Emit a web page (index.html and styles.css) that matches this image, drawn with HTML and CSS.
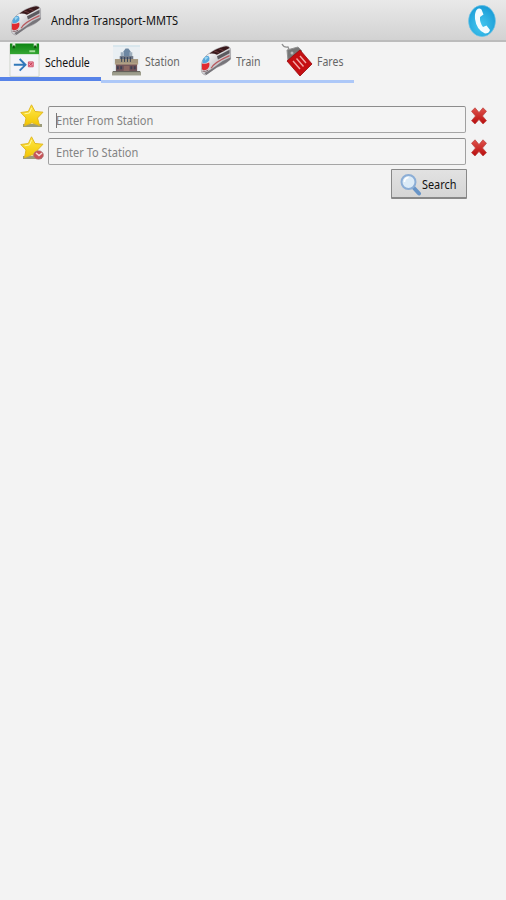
FILE: index.html
```html
<!DOCTYPE html>
<html lang="en">
<head>
    <meta charset="UTF-8">
    <meta name="viewport" content="width=device-width, initial-scale=1.0">
    <title>Andhra Transport-MMTS</title>
    <link rel="stylesheet" href="styles.css">
</head>
<body>
    <!-- shared icons -->
    <svg class="defs" width="0" height="0">
        <linearGradient id="gold" x1="0" y1="0" x2="0" y2="1">
            <stop offset="0" stop-color="#ffe94a"/>
            <stop offset="1" stop-color="#f2c500"/>
        </linearGradient>
        <linearGradient id="side" x1="0" y1="0" x2="1" y2="1">
            <stop offset="0.3" stop-color="#f1f1f3"/>
            <stop offset="1" stop-color="#8d8d94"/>
        </linearGradient>
        <linearGradient id="red" x1="0" y1="0" x2="0" y2="1">
            <stop offset="0" stop-color="#e0544d"/>
            <stop offset="1" stop-color="#b80c0c"/>
        </linearGradient>
        <linearGradient id="green" x1="0" y1="0" x2="0" y2="1">
            <stop offset="0" stop-color="#0c8511"/>
            <stop offset="1" stop-color="#35a634"/>
        </linearGradient>
        <radialGradient id="sky" cx="0.45" cy="0.65" r="0.6">
            <stop offset="0" stop-color="#45c8f0"/>
            <stop offset="1" stop-color="#1d9fd8"/>
        </radialGradient>
        <symbol id="train" viewBox="0 0 32 32">
            <path d="M1 23Q0 16 7 10Q14 4 25 1Q31 1 31 5V14Q28 19 17 23L5 31Q0 30 1 23z" fill="url(#side)" stroke="#9a999d" stroke-width=".7"/>
            <path d="M9 9Q15 4 25 1.500Q29 1 30 3L17 10Q13 8 9 9z" fill="#38181b"/>
            <path d="M14 6l5 2M19 4l5 2" stroke="#6d3b3e"/>
            <path d="M17 11.500L30 5v3.500L18 15z" fill="#5d5a60"/>
            <path d="M11 24Q14 18 30 11" fill="none" stroke="#b9595d" stroke-width="1.200"/>
            <path d="M4 29Q13 24 18 20T31 13v2Q26 19 17 23L6 31z" fill="#77757a"/>
            <path d="M2 16Q4 11 8 11Q10 13 9 16Q7 19 2 19z" fill="#56a5da"/>
            <path d="M4 13Q7 11 8 13L5 16z" fill="#96d3f0"/>
            <path d="M1.500 19Q5 20 9 18Q10 22 7 25Q3 27 1.500 25z" fill="#e02a30"/>
            <path d="M2 27q3 1 6-1" fill="none" stroke="#85646a"/>
        </symbol>
        <symbol id="star" viewBox="0 0 24 24">
            <path d="M3 20h19v3H3z" fill="#9c9c7b"/>
            <path d="M11.500 .8L15 7.500l8 .7-5.500 5.800 2 7.500-7.500-2.700-7.500 2.900 1.500-7.700L.8 8.500l7.500-1z" fill="url(#gold)" stroke="#e2b820" stroke-width="1" stroke-linejoin="round"/>
            <path d="M11.500 4L9.500 9l-5 .8" fill="none" stroke="#fff6a0"/>
        </symbol>
        <symbol id="cross" viewBox="0 0 16 18">
            <path d="M4 .8L8 5.500 12 .8l3.500 3.500L11.500 9l4 4.700L12 17l-4-4.500L4 17 .5 13.700 4.500 9 .5 4.300z" fill="url(#red)" stroke="#b9403e" stroke-width=".7" stroke-linejoin="round"/>
        </symbol>
    </svg>

    <header class="title-bar">
        <svg class="train-icon"><use href="#train"/></svg>
        <h1 class="title"><span class="label">Andhra Transport-MMTS</span></h1>
        <svg class="phone-icon" viewBox="0 0 28 32">
            <ellipse cx="14" cy="16" rx="13.500" ry="15.700" fill="url(#sky)" stroke="#79c8e8" stroke-width=".6"/>
            <path d="M8.500 5Q11 2.500 13.500 4.500L15.500 9.500L12 12Q11.500 17.500 15 22L18.500 20.500L22 25Q21 28.500 17 28.500Q8.500 25 7 14Q6.500 8 8.500 5z" fill="#f3fcff"/>
        </svg>
    </header>

    <nav class="tabs">
        <a class="tab tab-schedule active">
            <svg class="tab-icon calendar-icon" viewBox="0 0 32 35">
                <path d="M1 2h30v33H1z" fill="#f3f4f8" stroke="#cfd6ca"/>
                <path d="M1 1h30v11H1z" fill="url(#green)"/>
                <path d="M5 0v4M27 0v4" stroke="#d9e9d5" stroke-width="3"/>
                <path d="M5 3v3M27 3v3" stroke="#12520f" stroke-width="2"/>
                <path d="M21 9h6" stroke="#a6df9d" stroke-width="2"/>
                <path d="M5 23h12M11 17l6 6-6 6" fill="none" stroke="#3178b9" stroke-width="2"/>
                <path d="M20 20h5v5h-5z" fill="#f2a3b3" stroke="#cf5269"/>
                <path d="M21 21l3 3m0-3l-3 3" stroke="#c02e4a"/>
            </svg>
            <span class="label">Schedule</span>
        </a>
        <a class="tab tab-station">
            <svg class="tab-icon station-icon" viewBox="0 0 30 32">
                <path d="M1 1h28v28H1z" fill="#e9eff3"/>
                <path d="M1 1h28v1H1z" fill="#c5dce6"/>
                <path d="M0 28h30v4H0z" fill="#9d9d8c"/>
                <path d="M14 4h3l2 3v5h-7V7z" fill="#6d87a2"/>
                <path d="M9 8h3v5H9zM18 8h3v5h-3z" fill="#9badbd"/>
                <path d="M8 12h14v7H8z" fill="#6b7484"/>
                <path d="M3 15h24v5H3z" fill="#a4977f"/>
                <path d="M4 20h22v8H4z" fill="#71545a"/>
                <path d="M3 20h24" stroke="#b3a285" stroke-width="1.500"/>
                <path d="M5 24h20" stroke="#3e4053" stroke-width="3" stroke-dasharray="2 1.500"/>
                <path d="M10 13v5m3-5v5m3-5v5m3-5v5" stroke="#354156"/>
                <path d="M12 22h6v6h-6z" fill="#8c6762"/>
                <path d="M1 28h28" stroke="#5d5b54"/>
            </svg>
            <span class="label">Station</span>
        </a>
        <a class="tab tab-train">
            <svg class="tab-icon train-icon"><use href="#train"/></svg>
            <span class="label">Train</span>
        </a>
        <a class="tab tab-fares">
            <svg class="tab-icon tag-icon" viewBox="0 0 32 34">
                <path d="M1 1q2 4 6 3l2 5" fill="none" stroke="#8f8f8f" stroke-width="1.300"/>
                <path d="M6 7L17 4l4 4L7 18z" fill="#777" stroke="#929292"/>
                <path d="M19 7l12 14-12 12L6 18z" fill="#c50f12" stroke="#98080b" stroke-width=".8"/>
                <circle cx="11" cy="10" r="1.500" fill="#bcbcbc"/>
                <path d="M12 18l7 8M15.500 15.500l7 8M19 13l6 7" stroke="#f3aaa8" stroke-width="1.400"/>
            </svg>
            <span class="label">Fares</span>
        </a>
    </nav>

    <main class="search-form">
        <div class="row">
            <svg class="star-icon"><use href="#star"/></svg>
            <div class="field focused"><span class="label">Enter From Station</span></div>
            <svg class="cross-icon"><use href="#cross"/></svg>
        </div>
        <div class="row">
            <svg class="star-icon" viewBox="0 0 24 24">
                <use href="#star" width="24" height="24"/>
                <ellipse cx="18.500" cy="19" rx="5" ry="4.300" fill="#c65358" stroke="#a98888" stroke-width=".6"/>
                <path d="M16 17l3 2.500 3-2.500" fill="none" stroke="#f6dada" stroke-width="1.500"/>
            </svg>
            <div class="field"><span class="label">Enter To Station</span></div>
            <svg class="cross-icon"><use href="#cross"/></svg>
        </div>
        <button type="button" class="search-btn">
            <svg class="search-icon" viewBox="0 0 22 23">
                <path d="M13 14l6 6.500" stroke="#6794c7" stroke-width="4" stroke-linecap="round"/>
                <circle cx="8.500" cy="9" r="7" fill="#dcebf7" stroke="#8caed6" stroke-width="2"/>
                <path d="M4.500 9q0-4 4-4.500" fill="none" stroke="#fff" stroke-width="1.500"/>
            </svg>
            <span class="label">Search</span>
        </button>
    </main>
</body>
</html>
```

FILE: styles.css
```css
* {
    box-sizing: border-box;
}
body {
    margin: 0;
    min-height: 100vh;
    background: #f3f3f3;
    font-family: "Noto Sans", "Open Sans", sans-serif;
    font-size: 12.5px;
    color: #111;
}
svg {
    display: block;
    flex: none;
}
.defs {
    position: absolute;
}
/* condensed lettering */
.label {
    display: inline-block;
    transform: scaleX(0.885);
    transform-origin: left center;
    white-space: nowrap;
}
.title-bar {
    display: flex;
    align-items: center;
    height: 42px;
    padding: 0 10px;
    background: linear-gradient(#e9e9e9, #d2d2d2);
    border-bottom: 2px solid #bcbcbc;
}
.train-icon {
    width: 32px;
    height: 31px;
}
.title {
    flex: 1;
    margin: 1px 0 0 9px;
    font-size: 12.5px;
    font-weight: normal;
}
.phone-icon {
    width: 28px;
    height: 32px;
    margin-top: 2px;
}
.tabs {
    display: flex;
    width: 354px;
    height: 41px;
    color: #666;
}
.tab {
    display: flex;
    align-items: center;
    height: 41px;
    padding-bottom: 2px;
    border-bottom: 3px solid #adc8f8;
}
.tab .label {
    width: 0;
    margin-left: 4px;
    padding-top: 3px;
    transform: scaleX(0.84);
}
.tab-schedule {
    width: 101px;
    padding-left: 9px;
}
.tab-station {
    width: 91px;
    padding-left: 11px;
}
.tab-train {
    width: 83px;
    padding-left: 8px;
}
.tab-fares {
    width: 79px;
    padding-left: 6px;
}
.tab.active {
    height: 39px;
    padding-bottom: 0;
    border-bottom: 4px solid #5783e8;
    color: #111;
}
.tab.active .label {
    margin-left: 5px;
    padding-top: 5px;
}
.calendar-icon {
    width: 31px;
    height: 35px;
}
.station-icon {
    width: 29px;
    height: 32px;
}
.tag-icon {
    width: 32px;
    height: 34px;
}
.search-form {
    display: flex;
    flex-direction: column;
    gap: 5px;
    padding: 23px 19px 0 20px;
}
.row {
    display: flex;
    height: 27px;
}
.star-icon {
    width: 24px;
    height: 24px;
    margin: -2px 4px 0 0;
}
.field {
    display: flex;
    flex: 1;
    align-items: center;
    padding: 1px 0 0 7px;
    background: #f4f4f4;
    border: 1px solid;
    border-color: #8c8c8c #a0a0a0 #a5a5a5;
    border-radius: 2px;
    color: #838383;
}
/* text cursor */
.field.focused {
    background: linear-gradient(#777, #777) 7px 6px / 1px 15px no-repeat #f4f4f4;
}
.cross-icon {
    width: 16px;
    height: 18px;
    margin: 1px 0 0 5px;
}
.search-btn {
    display: flex;
    align-self: flex-end;
    align-items: center;
    width: 76px;
    height: 30px;
    margin: -1px 20px 0 0;
    padding: 1px 0 0 8px;
    background: linear-gradient(#e2e2e2, #d5d5d5);
    border: 1px solid #888;
    border-bottom-width: 2px;
    border-radius: 1px;
    font: inherit;
    color: #111;
}
.search-btn .label {
    padding-top: 1px;
    transform: scaleX(0.87);
}
.search-icon {
    width: 22px;
    height: 23px;
}
```
